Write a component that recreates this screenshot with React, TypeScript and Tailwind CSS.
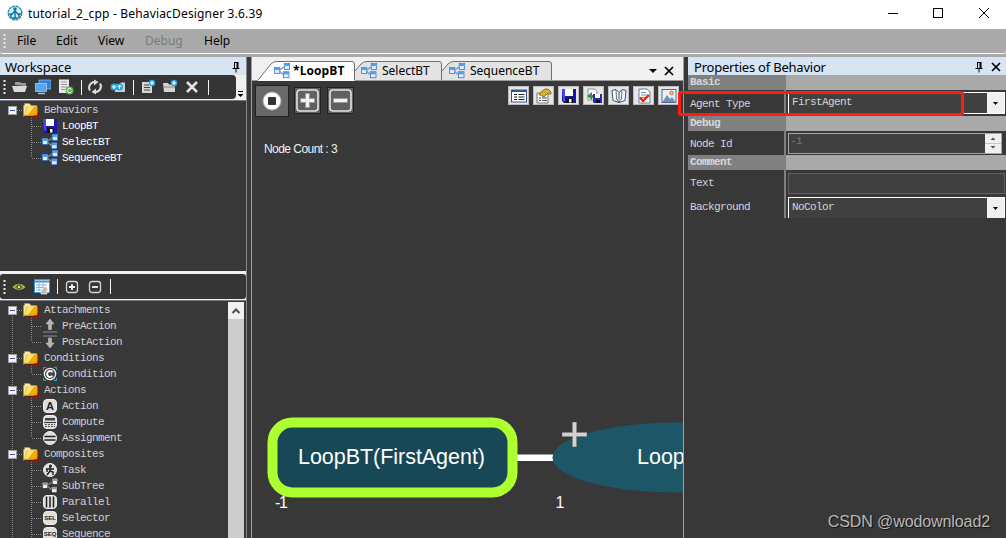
import { ReactNode } from "react";
import clsx from "clsx";

interface TreeItem {
  label: string;
  icon?: ReactNode;
  last?: boolean;
  bright?: boolean;
}

const Svg = ({ children, className = "size-4" }: { children: ReactNode; className?: string }) => (
  <svg viewBox="0 0 16 16" className={clsx("shrink-0", className)}>
    {children}
  </svg>
);

const Folder = () => (
  <Svg>
    <path d="M0.5 14.5V3.500h1V1.500h5L8 3.500h5.500V5" fill="#f4e6b4" stroke="#a98f45" strokeWidth="0.6" />
    <path d="M1 14 3.500 4.500H15V14Z" fill="#f5c52b" />
    <path d="M3 13 12 4.500h2.500V14H1Z" fill="#f0a80a" />
    <path d="M2.500 12 5 5h6L5 13H2Z" fill="#ffe97e" opacity=".8" />
    <path d="M1 14.300h14V4" fill="none" stroke="#5d2408" />
    <path d="M11 14h4V11" fill="none" stroke="#c00000" strokeWidth="1.500" />
  </Svg>
);

const Floppy = () => (
  <Svg>
    <path d="M1 1h14v14H3l-2-2Z" fill="#1717a8" />
    <path d="M1 1h3v12H2Z" fill="#4646ff" />
    <rect x="4" y="1" width="8" height="7" fill="#fff" />
    <rect x="5" y="10" width="7" height="5" fill="#111" />
    <rect x="8" y="11" width="2.500" height="3.500" fill="#fff" />
  </Svg>
);

const Nodes = ({ gray }: { gray?: boolean }) => {
  const c = gray ? "#9b9b9b" : "#4fa3ee";
  const d = gray ? "#111" : "#1b4fa8";
  const box = (x: number, y: number) => (
    <g>
      <rect x={x} y={y} width="5.500" height="6" fill={gray ? "#eee" : "#dcecff"} stroke={d} strokeWidth="0.6" />
      <rect x={x} y={y} width="5.500" height="2.500" fill={c} />
    </g>
  );
  return (
    <Svg>
      <path d="M5 7.500 10 4M5 8l5 4" stroke={gray ? "#888" : "#7895b8"} strokeWidth="1.300" />
      {box(0.3, 4.5)}
      {box(10.2, 0.5)}
      {box(9.5, 8.800)}
    </Svg>
  );
};

const Arrow = ({ down }: { down?: boolean }) => (
  <Svg>
    <path
      d={down ? "M1 2h14M8 14 4 9h2.500V4h3v5H12Z" : "M1 14h14M8 1 4 6h2.500v5.500h3V6H12Z"}
      fill="#b5b5b5"
      stroke="#b5b5b5"
      strokeWidth="0.7"
    />
  </Svg>
);

const Badge = ({ children, round }: { children: ReactNode; round?: boolean }) => (
  <Svg>
    <rect x="1.500" y="1.500" width="13" height="13" rx={round ? 6.5 : 3.5} fill="#dedede" stroke="#eee" />
    {children}
  </Svg>
);

const BadgeText = ({ children, size }: { children: string; size: number }) => (
  <text x="8" y={8 + size * 0.36} fontSize={size} textAnchor="middle" fontWeight="700" fill="#222" fontFamily="Liberation Sans, sans-serif" letterSpacing="0">
    {children}
  </text>
);

const Pin = () => (
  <svg viewBox="0 0 8 12" className="h-3 w-2 shrink-0">
    <path d="M2 1.500h4M2.500 1v6M0.500 7.500h7M4 8v3.500" stroke="#000" fill="none" />
    <path d="M5.500 1v6" stroke="#000" strokeWidth="2" />
  </svg>
);

const Cross = () => (
  <svg viewBox="0 0 10 10" className="size-[10px] shrink-0">
    <path d="M1 1l8 8M9 1 1 9" stroke="#000" strokeWidth="1.700" />
  </svg>
);

const Grip = () => (
  <svg viewBox="0 0 3 16" className="h-4 w-[3px] shrink-0">
    <path d="M1.500 1v15" stroke="#e8e8e8" strokeWidth="2" strokeDasharray="2 2" />
  </svg>
);

const Sep = ({ className }: { className?: string }) => <span className={clsx("h-[15px] w-px shrink-0 bg-gray-100", className)} />;

const PlusMinus = ({ plus, className }: { plus?: boolean; className?: string }) => (
  <Svg className={clsx("size-4", className)}>
    <rect x="2.500" y="2.500" width="11" height="11" rx="2.500" fill="none" stroke="#d6d6d6" strokeWidth="1.300" />
    <path d={plus ? "M5 8h6M8 5v6" : "M5 8h6"} stroke="#f5f5f5" strokeWidth="1.800" />
  </Svg>
);

const BlueAdd = ({ x, y }: { x: number; y: number }) => (
  <g>
    <circle cx={x} cy={y} r="3.200" fill="#29a8e0" />
    <path d={`M${x - 2} ${y}h4M${x} ${y - 2}v4`} stroke="#fff" strokeWidth="1.200" />
  </g>
);

const behaviors: TreeItem[] = [
  { label: "Behaviors" },
  { label: "LoopBT", icon: <Floppy />, bright: true },
  { label: "SelectBT", icon: <Nodes />, bright: true },
  { label: "SequenceBT", icon: <Nodes />, last: true, bright: true },
];

const nodeTypes: TreeItem[] = [
  { label: "Attachments" },
  { label: "PreAction", icon: <Arrow /> },
  { label: "PostAction", icon: <Arrow down />, last: true },
  { label: "Conditions" },
  {
    label: "Condition",
    last: true,
    icon: (
      <Svg>
        <path d="M1.500 4V1.500H4M12 1.500h2.500V4M1.500 12v2.500H4M12 14.500h2.500V12" stroke="#27a9dc" fill="none" />
        <circle cx="8" cy="8" r="5.700" fill="#444" stroke="#eee" strokeWidth="1.300" />
        <path d="M10.500 6.200a3 3 0 1 0 0 3.600" stroke="#fff" strokeWidth="1.900" fill="none" />
      </Svg>
    ),
  },
  { label: "Actions" },
  { label: "Action", icon: <Badge><BadgeText size={11}>A</BadgeText></Badge> },
  {
    label: "Compute",
    icon: (
      <Badge>
        <rect x="3" y="4" width="10" height="2.500" fill="#444" />
        <path d="M2 8.500h12" stroke="#333" />
        <path d="M3 10.500h10M3 12.500h10" stroke="#555" strokeDasharray="2 1" />
      </Badge>
    ),
  },
  { label: "Assignment", last: true, icon: <Badge round><path d="M2.500 6.500h11M2.500 10h11" stroke="#222" strokeWidth="1.700" /></Badge> },
  { label: "Composites" },
  {
    label: "Task",
    icon: (
      <Badge round>
        <circle cx="8.500" cy="4" r="1.500" fill="#222" />
        <path d="M4 7h8M8 5v4l-3 4M8 9l3 1v3M5 10V7" stroke="#222" strokeWidth="1.400" fill="none" />
      </Badge>
    ),
  },
  { label: "SubTree", icon: <Nodes gray /> },
  { label: "Parallel", icon: <Badge><path d="M4.500 2.500v11M8 2.500v11M11.500 2.500v11" stroke="#222" strokeWidth="1.500" /></Badge> },
  { label: "Selector", icon: <Badge><BadgeText size={6}>SEL</BadgeText></Badge> },
  { label: "Sequence", icon: <Badge><BadgeText size={6}>SEQ</BadgeText></Badge> },
];

const mono = "font-['Liberation_Mono',monospace] text-[11px] tracking-[-0.6px]";

function Tree({ items, trunk }: { items: TreeItem[]; trunk?: boolean }) {
  return (
    <div className={clsx("flex flex-col whitespace-nowrap leading-4", mono)}>
      {items.map((item, i) => (
        <div key={item.label} className={clsx("flex h-4 shrink-0 items-center", item.bright ? "text-white" : "text-[#d0d0d0]")}>
          <svg viewBox={item.icon ? "0 0 42 16" : "0 0 23 16"} className={clsx("h-4 shrink-0", item.icon ? "w-[42px]" : "w-[23px]")}>
            {trunk && <path d={i === 0 ? "M12.500 8v8" : "M12.500 0v16"} stroke="#8c8c8c" strokeDasharray="1 1" />}
            {item.icon ? (
              <path d={item.last ? "M31.500 0v8M32 8.500h10" : "M31.500 0v16M32 8.500h10"} stroke="#8c8c8c" strokeDasharray="1 1" fill="none" />
            ) : (
              <>
                <path d="M17 8.500h6" stroke="#8c8c8c" strokeDasharray="1 1" />
                <rect x="8.500" y="4.500" width="8" height="8" fill="#f3f3f3" stroke="#a0a0a0" />
                <path d="M10 8.500h5" stroke="#3b56a8" />
              </>
            )}
          </svg>
          {item.icon ?? <Folder />}
          <span className={item.icon ? "ml-1" : "ml-[5px]"}>{item.label}</span>
        </div>
      ))}
    </div>
  );
}

function PanelHeader({ title, closable }: { title: string; closable?: boolean }) {
  return (
    <div className={clsx("flex h-[18px] shrink-0 items-center bg-[#d7e4f2] text-black", closable ? "pl-[6px] pr-[5px]" : "pl-[5px] pr-[6px]")}>
      <span className={clsx("grow pt-[3px] text-[13px] leading-none", closable ? "tracking-[-0.22px]" : "tracking-[-0.1px]")}>{title}</span>
      <span className="pt-0.5"><Pin /></span>
      {closable && <span className="ml-2 pt-0.5"><Cross /></span>}
    </div>
  );
}

function Tab({ label, width, active, className }: { label: string; width: number; active?: boolean; className?: string }) {
  const edge = active ? `M0 23 L13 7Q15 4.500 19 4.500H${width - 3}q2.500 0 2.500 2.500V23` : `M0 14 L6 7Q8.500 4.500 12 4.500H${width - 3}q2.500 0 2.500 2.500V23`;
  return (
    <div className={clsx("relative flex h-6 shrink-0 items-center pt-[3px] text-[12px] leading-none text-black", active ? "gap-[3px]" : "gap-[5px]", className)} style={{ width }}>
      <svg width={width} height="24" className="absolute inset-0">
        <path d={active ? `${edge}V24H0Z` : `${edge}H0Z`} fill={active ? "#fff" : "#e3e3e3"} />
        <path d={edge} fill="none" stroke="#6f6f6f" />
      </svg>
      <span className="relative"><Nodes /></span>
      <span className={clsx("relative whitespace-nowrap", active && "font-['Open_Sans',sans-serif] font-bold tracking-[0.1px]")}>{label}</span>
    </div>
  );
}

function Workspace() {
  return (
    <div className="flex w-[247px] shrink-0 flex-col border-r border-[#858a92]">
      <PanelHeader title="Workspace" />
      <div className="flex h-[25px] shrink-0 bg-[#f0f0f0]">
        <div className="flex h-6 w-[236px] items-center rounded-r-[4px] bg-[#353535] pl-[3px]">
          <Grip />
          <Svg className="ml-[6px] size-4">
            <path d="M3 6V3h5l1 1h5v3" fill="#999" />
            <path d="M0 7h15l-2 6H2Z" fill="#d9d9d9" />
          </Svg>
          <Svg className="ml-[7px] size-4">
            <rect x="4" y="1" width="12" height="9" fill="#2f7fd2" stroke="#a9cdf0" strokeWidth=".6" />
            <rect x="0.500" y="4.500" width="11" height="8" fill="#55a5ec" stroke="#cfe5fa" strokeWidth=".6" />
            <path d="M3 14.500h7" stroke="#9fc4e6" strokeWidth="1.500" />
          </Svg>
          <Svg className="ml-[7px] size-4">
            <path d="M1 0.500h10V14H1Z" fill="#e8e8e8" />
            <path d="M3 3h6M3 5.500h6M3 8h6M3 10.500h4" stroke="#999" />
            <circle cx="11.500" cy="11.500" r="4" fill="#57b947" />
            <path d="M13.500 10.500a2.200 2.200 0 1 0 0 2" stroke="#fff" fill="none" />
          </Svg>
          <Sep className="ml-[7px]" />
          <Svg className="ml-[5px] size-4">
            <path d="M3 11.500A5.500 5.500 0 0 1 7.500 3M13 4.500a5.500 5.500 0 0 1-4.500 8.500" stroke="#ddd" strokeWidth="2" fill="none" />
            <path d="M7 0.500 11.500 3 7 6.500ZM9 9.500 4.500 13 9 15.500Z" fill="#ddd" />
          </Svg>
          <Svg className="ml-[7px] size-4">
            <path d="M5 13V5h5l1-1.500h4V13Z" fill="#cfcfcf" />
            <circle cx="4" cy="8" r="3.500" fill="#28a5dc" />
            <circle cx="9.500" cy="8" r="3.500" fill="#28a5dc" />
            <path d="M2 8h4M4 6v4M9.500 10V6M7.700 8l1.800-2 1.800 2" stroke="#fff" fill="none" />
          </Svg>
          <Sep className="ml-[7px]" />
          <Svg className="ml-[6px] size-4">
            <path d="M2 3h10v11H2Z" fill="#d5d5d5" />
            <path d="M4 6h5M4 8.500h6M4 11h6" stroke="#444" />
            <BlueAdd x={12} y={4} />
          </Svg>
          <Svg className="ml-[6px] size-4">
            <path d="M1 4h5l1 1.500h6V13H2Z" fill="#d5d5d5" />
            <path d="M1 8h12" stroke="#888" />
            <BlueAdd x={12} y={4} />
          </Svg>
          <Svg className="ml-[6px] size-4">
            <path d="M3 3l10 10M13 3 3 13" stroke="#e2e2e2" strokeWidth="2.600" />
          </Svg>
          <Sep className="ml-2" />
        </div>
        <svg viewBox="0 0 10 24" className="h-6 w-[10px]">
          <path d="M2 16.500h5" stroke="#000" />
          <path d="M1.500 19h6l-3 3Z" fill="#000" />
        </svg>
      </div>
      <div className="h-[171px] shrink-0 border-t border-[#777786] pt-px">
        <Tree items={behaviors} />
      </div>
      <div className="shrink-0 bg-[#f0f0f0] pb-px pt-[3px]">
        <div className="flex h-[25px] items-center rounded-[3px] bg-[#353535] pl-[3px]">
          <Grip />
          <Svg className="ml-[5px] size-4">
            <path d="M1.500 8Q8 1.500 14.500 8 8 14.500 1.500 8Z" fill="#b5c94a" />
            <circle cx="8" cy="8" r="2.800" fill="#56661a" />
            <circle cx="8" cy="8" r="1.200" fill="#dce98a" />
            <path d="M4 8h1.500M10.500 8H12" stroke="#56661a" />
          </Svg>
          <Svg className="ml-[7px] size-4">
            <rect x="0.500" y="0.500" width="15" height="13" fill="#fff" stroke="#3196d8" />
            <path d="M1 2.500h14" stroke="#3196d8" strokeWidth="2" />
            <path d="M2 6h11M2 8.500h11M2 11h6M5 4v8M9 4v6" stroke="#85b6dc" />
            <path d="M11 7l4 4h-2v4H7v-4h1Z" fill="#bdbdbd" stroke="#fff" strokeWidth=".6" />
          </Svg>
          <Sep className="ml-[7px]" />
          <PlusMinus plus className="ml-[6px]" />
          <PlusMinus className="ml-[7px]" />
          <Sep className="ml-[7px]" />
        </div>
      </div>
      <div className="flex min-h-0 grow overflow-hidden border-t border-[#777786]">
        <div className="grow pt-px">
          <Tree items={nodeTypes} trunk />
        </div>
        <div className="mr-0.5 mt-px w-4 shrink-0 bg-[#cdcdcd]">
          <div className="flex h-[17px] items-center justify-center bg-[#f0f0f0]">
            <svg viewBox="0 0 10 10" className="size-[10px]">
              <path d="M1.500 7 5 3.500 8.500 7" stroke="#505050" strokeWidth="2" fill="none" />
            </svg>
          </div>
        </div>
      </div>
    </div>
  );
}

const canvasTools: ReactNode[] = [
  <Svg>
    <rect x="0.500" y="2" width="15" height="12" fill="#fff" stroke="#35558e" />
    <path d="M1 3h14" stroke="#35558e" strokeWidth="2" />
    <path d="M3 6.500h3M3 9h3M3 11.500h3M7.500 6.500h6M7.500 9h6M7.500 11.500h6" stroke="#222" />
  </Svg>,
  <Svg>
    <path d="M1 5h11v10H1Z" fill="#f7f7f7" stroke="#777" />
    <path d="M3 10h2M3 12.500h2M6 10h5M6 12.500h5" stroke="#555" />
    <path d="M5 4 9 1h3l3 3v2h-4L8 9 3 6.500Z" fill="#d6b02a" stroke="#655012" strokeWidth=".7" />
  </Svg>,
  <Floppy />,
  <Svg>
    <path d="M2 1h7l2 2v9H2Z" fill="#fff" stroke="#666" strokeWidth=".7" />
    <path d="M1 8l5-4v3h3v3H6v2Z" fill="#34934a" />
    <path d="M7 6h9v9H8l-1-1Z" fill="#2929b0" />
    <path d="M9 6h5v4H9Z" fill="#fff" />
    <path d="M10 12h4v3h-4Z" fill="#111" />
  </Svg>,
  <Svg>
    <path d="M8 4.500 5 1.500 1 2.500l1 10 6 2 6-2 1-10-3.500-1L8 4.500v10" fill="#fff" stroke="#34506e" />
    <path d="M5 2l.500 9 2.500 3M11 2l-.500 9L8 14" fill="#d6e5f3" stroke="#34506e" strokeWidth=".8" />
  </Svg>,
  <Svg>
    <path d="M3 1h8l3 3v11H3Z" fill="#fff" stroke="#5582ad" />
    <path d="M5 4.500h5M5 7h7M5 9.500h7" stroke="#6d94b8" />
    <path d="M4 9.500l3 3.500 6-6" stroke="#e02b12" strokeWidth="2.400" fill="none" />
  </Svg>,
  <Svg>
    <rect x="1" y="1.500" width="14" height="13" fill="#e9f2fb" stroke="#4d6d99" />
    <circle cx="10.500" cy="5" r="1.700" fill="#f4c6a0" stroke="#d06830" />
    <path d="M1.500 14 6 7l3 4 2-2 3.500 5Z" fill="#6f8fb5" />
  </Svg>,
];

function Editor() {
  return (
    <div className="relative flex w-[433px] shrink-0 flex-col overflow-hidden border-x border-[#a0a0a0]">
      <div className="flex h-6 shrink-0 bg-[#f0f0f0] shadow-[inset_0_-1px_0_#9a9a9a]">
        <Tab label="*LoopBT" width={97} active className="ml-[6px] pl-4" />
        <Tab label="SelectBT" width={87} className="pl-[6px]" />
        <Tab label="SequenceBT" width={110} className="pl-[7px]" />
        <div className="ml-auto flex items-center gap-[7px] pr-[9px] pt-[3px]">
          <svg viewBox="0 0 8 4" className="h-1 w-2"><path d="M0 0h8L4 4Z" fill="#000" /></svg>
          <Cross />
        </div>
      </div>
      <div className="flex shrink-0 pl-[3px] pt-1">
        <div className="flex h-8 w-[34px] items-center justify-center border border-[#222] bg-[#696969]">
          <svg viewBox="0 0 20 20" className="size-5">
            <circle cx="10" cy="10" r="9" fill="#fff" stroke="#b0b0b0" />
            <rect x="6" y="6" width="8" height="8" rx="1" fill="#333" />
          </svg>
        </div>
        {[true, false].map((plus) => (
          <div key={String(plus)} className={clsx("mt-0.5 flex size-[27px] items-center justify-center border border-[#222] bg-[#606060]", plus ? "ml-[5px]" : "ml-[6px]")}>
            <svg viewBox="0 0 25 25" className="size-[25px]">
              <rect x="2" y="2" width="21" height="21" rx="3" fill="none" stroke="#e4e4e4" strokeWidth="1.600" />
              <path d={plus ? "M5 12.500h15M12.500 5v15" : "M5 12.500h15"} stroke="#999" strokeWidth="5" />
              <path d={plus ? "M6 12.500h13M12.500 6v13" : "M6 12.500h13"} stroke="#f2f2f2" strokeWidth="3" />
            </svg>
          </div>
        ))}
        <div className="ml-[154px] mt-px flex gap-1">
          {canvasTools.map((icon, i) => (
            <div key={i} className="flex h-[19px] w-[21px] shrink-0 items-center justify-center border border-[#bcbcbc] bg-[#e6e6e6]">
              {icon}
            </div>
          ))}
        </div>
      </div>
      <p className="ml-3 mt-6 font-['Liberation_Sans',sans-serif] text-[12px] leading-4 tracking-[-0.55px] text-[#f0f0f0]">Node Count : 3</p>
      {/* behavior graph */}
      <svg viewBox="252 400 431 138" className="mt-auto h-[138px] w-[431px] shrink-0 font-['Liberation_Sans',sans-serif]" fill="#fff">
        <path d="M517 457.700h37" stroke="#fff" strokeWidth="6.400" />
        <ellipse cx="676" cy="457.500" rx="123.500" ry="35" fill="#1d5666" />
        <rect x="272.500" y="422.500" width="240" height="70" rx="20" fill="#184756" stroke="#adff2f" strokeWidth="10" />
        <text x="298" y="464" fontSize="21.500" textLength="187">LoopBT(FirstAgent)</text>
        <text x="637" y="464" fontSize="21.500">Loop</text>
        <text x="275" y="508" fontSize="16" textLength="13">-1</text>
        <text x="555.500" y="508" fontSize="16">1</text>
        <path d="M562 434.500h25M574.500 422v25" stroke="#999" strokeWidth="4.600" />
        <path d="M562.500 434.500h24M574.500 422.500v24" stroke="#d2d2d2" strokeWidth="3" />
      </svg>
    </div>
  );
}

function Section({ label }: { label: string }) {
  return (
    <div className="flex h-[15px] shrink-0 items-center bg-[#a9a9a9]">
      <span className="flex h-full w-[98px] items-center bg-[#808080] pl-0.5 font-bold leading-none text-[#d8d8d8]">{label}</span>
    </div>
  );
}

function Field({ label, className, children }: { label: string; className: string; children: ReactNode }) {
  return (
    <div className={clsx("flex shrink-0", className)}>
      <div className="flex w-[98px] shrink-0 items-center border-r-2 border-[#808080] pl-[2px] pt-0.5 text-[#d4d4d4]">{label}</div>
      <div className="ml-0.5 grow pt-0.5">{children}</div>
    </div>
  );
}

function Combo({ value, open }: { value: string; open?: boolean }) {
  return (
    <div className={clsx("mr-px flex h-[22px] border border-white bg-[#404040] text-[#d4d4d4]", open && "border-b-0")}>
      <span className="grow pl-[3px] pt-[2px] leading-[14px]">{value}</span>
      <span className="flex w-[17px] items-center justify-center bg-[#f0f0f0]">
        <svg viewBox="0 0 5 3" className="h-[3px] w-[5px]"><path d="M0 0h5L2.500 3Z" fill="#000" /></svg>
      </span>
    </div>
  );
}

function Properties() {
  return (
    <div className="relative ml-1 flex grow flex-col">
      <PanelHeader title="Properties of Behavior" closable />
      <div className={clsx("flex flex-col", mono)}>
        <Section label="Basic" />
        <Field label="Agent Type" className="h-[26px]"><Combo value="FirstAgent" /></Field>
        <Section label="Debug" />
        <Field label="Node Id" className="h-6">
          <div className="mr-1 flex h-[21px] border border-[#a6a6a6] bg-[#404040] text-[#747474]">
            <span className="grow pl-px leading-[15px]">-1</span>
            <svg viewBox="0 0 16 19" className="h-[19px] w-4 bg-[#f0f0f0]">
              <path d="M0 9.500h16" stroke="#c8c8c8" />
              <path d="M5.500 6h5L8 3.500ZM5.500 12h5L8 14.500Z" fill="#555" />
            </svg>
          </div>
        </Field>
        <Section label="Comment" />
        <Field label="Text" className="h-[25px]">
          <div className="mr-px mt-px h-[21px] border border-[#606060] bg-[#404040]" />
        </Field>
        <Field label="Background" className="h-[23px]"><div className="h-[21px] overflow-hidden"><Combo value="NoColor" open /></div></Field>
      </div>
      {/* highlight over the agent type row */}
      <div className="absolute -left-[10px] top-[34px] h-[25px] w-[286px] rounded-[3px] border-[3px] border-[#ff1c10]" />
      <p className="mb-1 ml-auto mr-4 mt-auto font-['Liberation_Sans',sans-serif] text-[16px] leading-6 tracking-[-0.1px] text-[#b9b9b9] [text-shadow:1px_1px_1px_#111]">CSDN @wodownload2</p>
    </div>
  );
}

export default function App() {
  return (
    <div className="flex h-[538px] w-[1006px] flex-col overflow-hidden bg-[#383838] font-['Noto_Sans',sans-serif]">
      <header className="flex h-[29px] shrink-0 items-center bg-white pl-[7px] text-black">
        <Svg className="-mt-1 size-4">
          <circle cx="8" cy="8" r="6.800" fill="#d9f0f7" stroke="#188bb0" strokeWidth="1.300" strokeDasharray="3 .6" />
          <circle cx="8" cy="4" r="1.800" fill="#147a9d" />
          <path d="M8 4v10M8 6 4 10v3M8 6l4 4v3M2 9h4M10 9h4M5 13h6" stroke="#147a9d" strokeWidth="1.500" fill="none" />
        </Svg>
        <span className="ml-[5px] pb-px text-[12px] tracking-[0.17px]">tutorial_2_cpp - BehaviacDesigner 3.6.39</span>
        <svg viewBox="0 0 102 12" className="-mt-1 ml-auto mr-4 h-3 w-[102px]" fill="none" stroke="#000">
          <path d="M0 6.500h10" />
          <rect x="45.500" y="1.500" width="9" height="9" />
          <path d="M91 1l10 10M101 1 91 11" />
        </svg>
      </header>
      <div className="h-7 shrink-0 bg-[#a9a9a9]">
        <nav className="flex h-[25px] items-center rounded-b-[3px] border-b border-white pl-[3px] text-[12px] text-black">
          <Grip />
          <span className="ml-[11px] w-[39px]">File</span>
          <span className="w-[42px]">Edit</span>
          <span className="w-[47px]">View</span>
          <span className="w-[59px] text-[#7c7c7c]">Debug</span>
          <span>Help</span>
        </nav>
      </div>
      <main className="flex min-h-0 grow">
        <Workspace />
        <div className="w-1 shrink-0" />
        <Editor />
        <Properties />
      </main>
    </div>
  );
}
